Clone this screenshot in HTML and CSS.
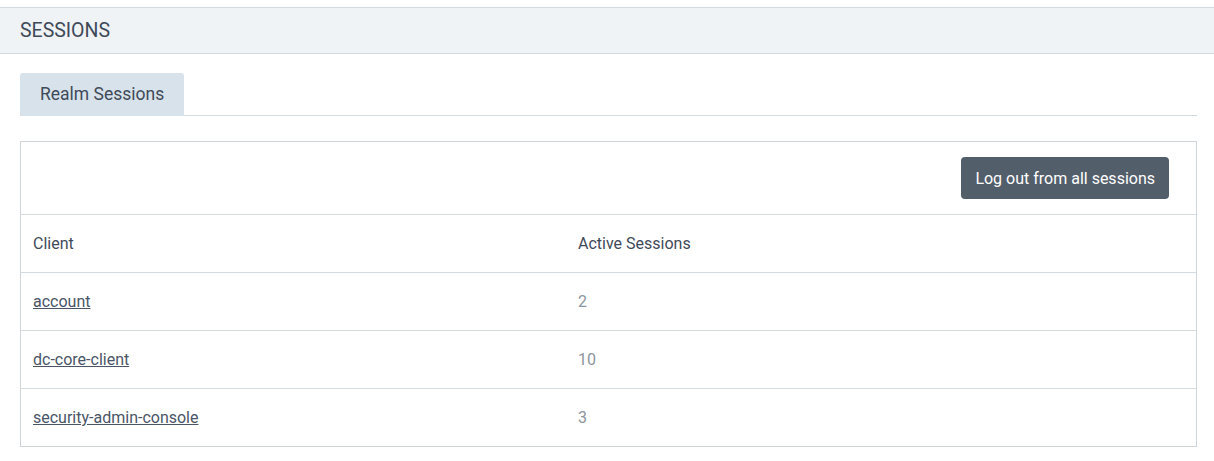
FILE: index.html
```html
<!DOCTYPE html>
<html>
<head>
<meta charset="utf-8">
<link rel="stylesheet" href="styles.css">
</head>
<body>
<div class="page-header">SESSIONS</div>
<div class="content">
  <div class="tabs">
    <div class="tab active">Realm Sessions</div>
  </div>
  <div class="panel">
    <div class="toolbar">
      <button class="btn">Log out from all sessions</button>
    </div>
    <table class="sessions">
      <thead>
        <tr><th class="col-client">Client</th><th>Active Sessions</th></tr>
      </thead>
      <tbody>
        <tr><td><a href="#">account</a></td><td class="num">2</td></tr>
        <tr><td><a href="#">dc-core-client</a></td><td class="num">10</td></tr>
        <tr><td><a href="#">security-admin-console</a></td><td class="num">3</td></tr>
      </tbody>
    </table>
  </div>
</div>
</body>
</html>
```
FILE: styles.css
```css
html, body {
  margin: 0;
  padding: 0;
  background: #ffffff;
}
body {
  padding-top: 7px;
  font-family: Roboto, "Liberation Sans", Arial, sans-serif;
  color: #3f4a59;
}
.page-header {
  background: #eff3f6;
  border-top: 1px solid #d3dbe2;
  border-bottom: 1px solid #d3dbe2;
  height: 45px;
  line-height: 45px;
  padding-left: 20px;
  font-size: 19.5px;
}
.content {
  padding: 19px 17px 0 20px;
}
.tabs {
  display: flex;
  border-bottom: 1px solid #d3dbe2;
  height: 42px;
}
.tab {
  background: #d8e2ea;
  border-radius: 3px 3px 0 0;
  padding: 0 20px;
  height: 43px;
  line-height: 43px;
  font-size: 17.5px;
}
.panel {
  margin-top: 25px;
  border: 1px solid #cfd4d9;
}
.toolbar {
  display: flex;
  justify-content: flex-end;
  padding: 15px 27px 15px 0;
  border-bottom: 1px solid #d3dbe2;
}
.btn {
  background: #535e6b;
  color: #ffffff;
  border: none;
  border-radius: 4px;
  height: 42px;
  padding: 0 14px;
  font-family: Roboto, "Liberation Sans", Arial, sans-serif;
  font-size: 16px;
}
.sessions {
  width: 100%;
  border-collapse: collapse;
}
.sessions th, .sessions td {
  height: 57px;
  padding: 0 12px;
  text-align: left;
  font-weight: normal;
  font-size: 16px;
  vertical-align: middle;
}
.sessions tbody tr td {
  border-top: 1px solid #d3dbe2;
}
.col-client {
  width: 521px;
}
.sessions th {
  color: #3f4a59;
}
.sessions a {
  color: #4a5567;
  text-decoration: underline;
}
.num {
  color: #8c95a0;
}
```
